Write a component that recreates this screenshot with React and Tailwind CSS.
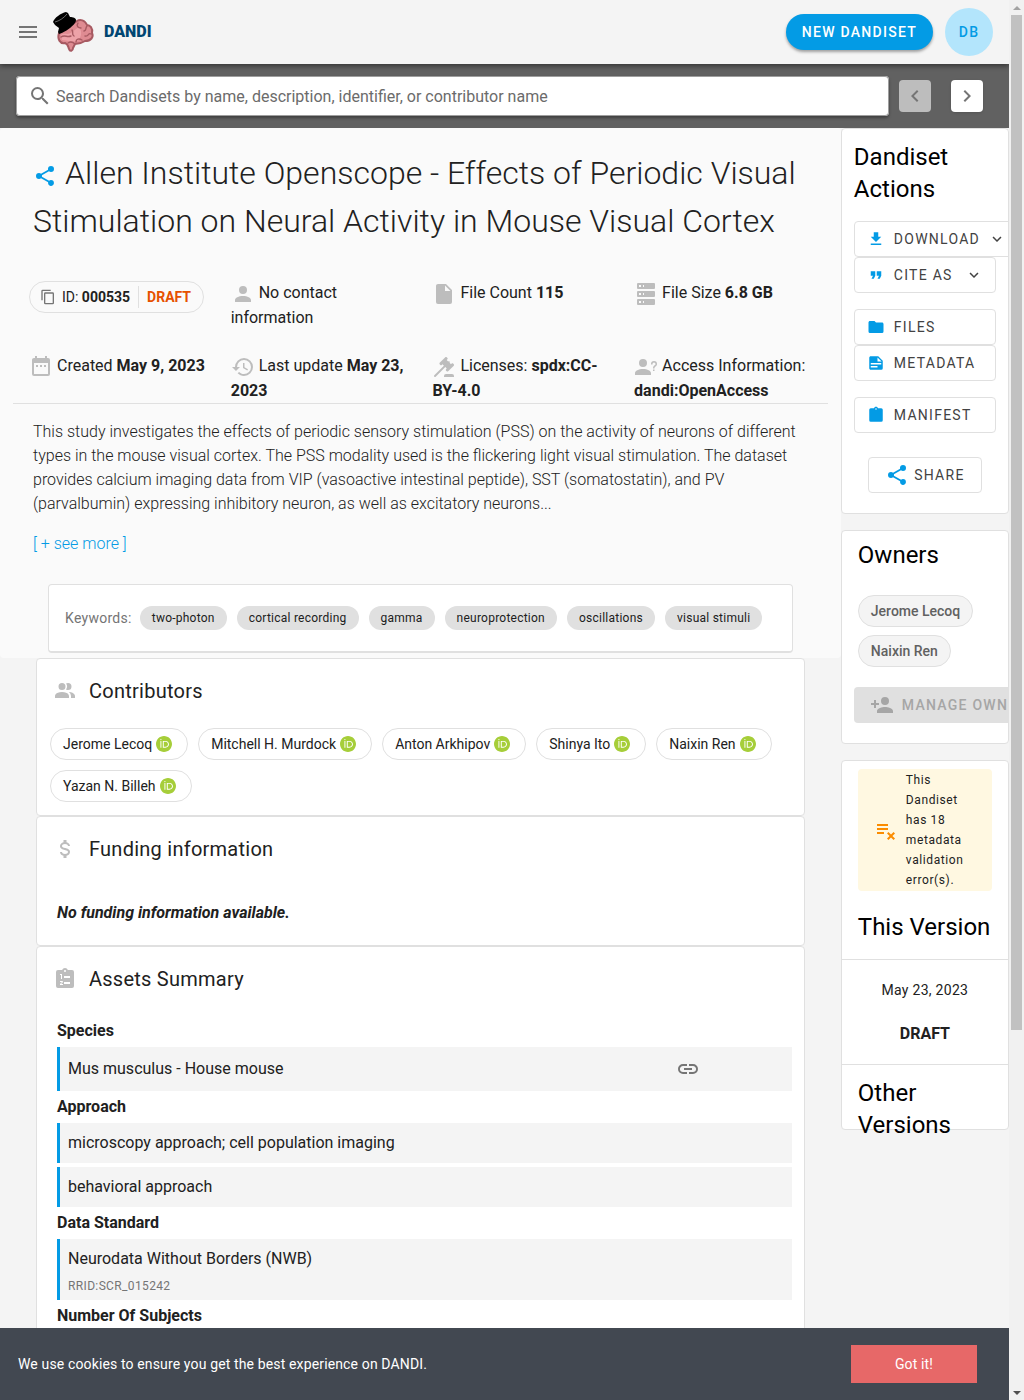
import React from "react";
import { SiOrcid } from "react-icons/si";

const paths = {
  menu: "M3,6H21V8H3V6M3,11H21V13H3V11M3,16H21V18H3V16Z",
  magnify:
    "M9.5,3A6.5,6.5 0 0,1 16,9.5C16,11.11 15.41,12.59 14.44,13.73L14.71,14H15.5L20.5,19L19,20.5L14,15.5V14.71L13.73,14.44C12.59,15.41 11.11,16 9.5,16A6.5,6.5 0 0,1 3,9.5A6.5,6.5 0 0,1 9.5,3M9.5,5C7,5 5,7 5,9.5C5,12 7,14 9.5,14C12,14 14,12 14,9.5C14,7 12,5 9.5,5Z",
  left: "M15.41,16.58L10.83,12L15.41,7.41L14,6L8,12L14,18L15.41,16.58Z",
  right: "M8.59,16.58L13.17,12L8.59,7.41L10,6L16,12L10,18L8.59,16.58Z",
  down: "M7.41,8.58L12,13.17L16.59,8.58L18,10L12,16L6,10L7.41,8.58Z",
  share:
    "M18,16.08C17.24,16.08 16.56,16.38 16.04,16.85L8.91,12.7C8.96,12.47 9,12.24 9,12C9,11.76 8.96,11.53 8.91,11.3L15.96,7.19C16.5,7.69 17.21,8 18,8A3,3 0 0,0 21,5A3,3 0 0,0 18,2A3,3 0 0,0 15,5C15,5.24 15.04,5.47 15.09,5.7L8.04,9.81C7.5,9.31 6.79,9 6,9A3,3 0 0,0 3,12A3,3 0 0,0 6,15C6.79,15 7.5,14.69 8.04,14.19L15.16,18.34C15.11,18.55 15.08,18.77 15.08,19C15.08,20.61 16.39,21.91 18,21.91C19.61,21.91 20.92,20.61 20.92,19A2.92,2.92 0 0,0 18,16.08Z",
  copy: "M19,21H8V7H19M19,5H8A2,2 0 0,0 6,7V21A2,2 0 0,0 8,23H19A2,2 0 0,0 21,21V7A2,2 0 0,0 19,5M16,1H4A2,2 0 0,0 2,3V17H4V3H16V1Z",
  account:
    "M12,4A4,4 0 0,1 16,8A4,4 0 0,1 12,12A4,4 0 0,1 8,8A4,4 0 0,1 12,4M12,14C16.42,14 20,15.79 20,18V20H4V18C4,15.79 7.58,14 12,14Z",
  file: "M13,9V3.5L18.5,9M6,2C4.89,2 4,2.89 4,4V20A2,2 0 0,0 6,22H18A2,2 0 0,0 20,20V8L14,2H6Z",
  server:
    "M4,1H20A1,1 0 0,1 21,2V6A1,1 0 0,1 20,7H4A1,1 0 0,1 3,6V2A1,1 0 0,1 4,1M4,9H20A1,1 0 0,1 21,10V14A1,1 0 0,1 20,15H4A1,1 0 0,1 3,14V10A1,1 0 0,1 4,9M4,17H20A1,1 0 0,1 21,18V22A1,1 0 0,1 20,23H4A1,1 0 0,1 3,22V18A1,1 0 0,1 4,17M9,5H10V3H9V5M9,13H10V11H9V13M9,21H10V19H9V21M5,3V5H7V3H5M5,11V13H7V11H5M5,19V21H7V19H5Z",
  calendar:
    "M9,10H7V12H9V10M13,10H11V12H13V10M17,10H15V12H17V10M19,3H18V1H16V3H8V1H6V3H5C3.89,3 3,3.9 3,5V19A2,2 0 0,0 5,21H19A2,2 0 0,0 21,19V5A2,2 0 0,0 19,3M19,19H5V8H19V19Z",
  history:
    "M13.5,8H12V13L16.28,15.54L17,14.33L13.5,12.25V8M13,3A9,9 0 0,0 4,12H1L4.96,16.03L9,12H6A7,7 0 0,1 13,5A7,7 0 0,1 20,12A7,7 0 0,1 13,19C11.07,19 9.32,18.21 8.06,16.94L6.64,18.36C8.27,20 10.5,21 13,21A9,9 0 0,0 22,12A9,9 0 0,0 13,3",
  gavel:
    "M2.3,20.28L11.9,10.68L10.5,9.26L9.78,9.97C9.39,10.36 8.76,10.36 8.37,9.97L7.66,9.26C7.27,8.87 7.27,8.24 7.66,7.85L13.32,2.19C13.71,1.8 14.34,1.8 14.73,2.19L15.44,2.9C15.83,3.29 15.83,3.92 15.44,4.31L14.73,5L16.15,6.43C16.54,6.04 17.17,6.04 17.56,6.43C17.95,6.82 17.95,7.46 17.56,7.85L18.97,9.26L19.68,8.55C20.07,8.16 20.71,8.16 21.1,8.55L21.8,9.26C22.19,9.65 22.19,10.29 21.8,10.68L16.15,16.33C15.76,16.72 15.12,16.72 14.73,16.33L14.03,15.63C13.63,15.24 13.63,14.6 14.03,14.21L14.73,13.5L13.32,12.09L3.71,21.7C3.32,22.09 2.69,22.09 2.3,21.7C1.91,21.31 1.91,20.67 2.3,20.28M20,19A2,2 0 0,1 22,21V22H12V21A2,2 0 0,1 14,19H20Z",
  accountQuestion:
    "M13,8A4,4 0 0,1 9,12A4,4 0 0,1 5,8A4,4 0 0,1 9,4A4,4 0 0,1 13,8M17,18V20H1V18C1,15.79 4.58,14 9,14C13.42,14 17,15.79 17,18M20.5,14.5V16H19V14.5H20.5M18.5,9.5H17V9A3,3 0 0,1 20,6A3,3 0 0,1 23,9C23,9.97 22.5,10.88 21.71,11.41L21.41,11.6C20.84,12 20.5,12.61 20.5,13.3V13.5H19V13.3C19,12.11 19.6,11 20.59,10.35L20.88,10.16C21.27,9.9 21.5,9.47 21.5,9A1.5,1.5 0 0,0 20,7.5A1.5,1.5 0 0,0 18.5,9V9.5Z",
  people:
    "M16 17V19H2V17S2 13 9 13 16 17 16 17M12.5 7.5A3.5 3.5 0 1 0 9 11A3.5 3.5 0 0 0 12.5 7.5M15.94 13A5.32 5.32 0 0 1 18 17V19H22V17S22 13.37 15.94 13M15 4A3.39 3.39 0 0 0 13.07 4.59A5 5 0 0 1 13.07 10.41A3.39 3.39 0 0 0 15 11A3.5 3.5 0 0 0 15 4Z",
  dollar:
    "M7,15H9C9,16.08 10.37,17 12,17C13.63,17 15,16.08 15,15C15,13.9 13.96,13.5 11.76,12.97C9.64,12.44 7,11.78 7,9C7,7.21 8.47,5.69 10.5,5.18V3H13.5V5.18C15.53,5.69 17,7.21 17,9H15C15,7.92 13.63,7 12,7C10.37,7 9,7.92 9,9C9,10.1 10.04,10.5 12.24,11.03C14.36,11.56 17,12.22 17,15C17,16.79 15.53,18.31 13.5,18.82V21H10.5V18.82C8.47,18.31 7,16.79 7,15Z",
  link: "M3.9,12C3.9,10.29 5.29,8.9 7,8.9H11V7H7A5,5 0 0,0 2,12A5,5 0 0,0 7,17H11V15.1H7C5.29,15.1 3.9,13.71 3.9,12M8,13H16V11H8V13M17,7H13V8.9H17C18.71,8.9 20.1,10.29 20.1,12C20.1,13.71 18.71,15.1 17,15.1H13V17H17A5,5 0 0,0 22,12A5,5 0 0,0 17,7Z",
  download: "M5,20H19V18H5M19,9H15V3H9V9H5L12,16L19,9Z",
  quote: "M14,17H17L19,13V7H13V13H16M6,17H9L11,13V7H5V13H8L6,17Z",
  folder:
    "M10,4H4C2.89,4 2,4.89 2,6V18A2,2 0 0,0 4,20H20A2,2 0 0,0 22,18V8C22,6.89 21.1,6 20,6H12L10,4Z",
  note: "M14,10H19.5L14,4.5V10M5,3H15L21,9V19A2,2 0 0,1 19,21H5C3.89,21 3,20.1 3,19V5C3,3.89 3.89,3 5,3M5,12V14H19V12H5M5,16V18H14V16H5Z",
  clipboard:
    "M19,3H14.82C14.4,1.84 13.3,1 12,1C10.7,1 9.6,1.84 9.18,3H5A2,2 0 0,0 3,5V19A2,2 0 0,0 5,21H19A2,2 0 0,0 21,19V5A2,2 0 0,0 19,3M12,3A1,1 0 0,1 13,4A1,1 0 0,1 12,5A1,1 0 0,1 11,4A1,1 0 0,1 12,3",
  clipboardList:
    "M19,3H14.82C14.4,1.84 13.3,1 12,1C10.7,1 9.6,1.84 9.18,3H5A2,2 0 0,0 3,5V19A2,2 0 0,0 5,21H19A2,2 0 0,0 21,19V5A2,2 0 0,0 19,3M12,3A1,1 0 0,1 13,4A1,1 0 0,1 12,5A1,1 0 0,1 11,4A1,1 0 0,1 12,3M7,7H9V12H8V8H7V7M10,17V18H7V17.08L9,15H7V14H9.25A0.75,0.75 0 0,1 10,14.75C10,14.95 9.92,15.14 9.79,15.27L8.12,17H10M11,9H17V11H11V9M11,15H17V17H11V15Z",
  accountPlus:
    "M15,14C12.33,14 7,15.33 7,18V20H23V18C23,15.33 17.67,14 15,14M6,10V7H4V10H1V12H4V15H6V12H9V10M15,12A4,4 0 0,0 19,8A4,4 0 0,0 15,4A4,4 0 0,0 11,8A4,4 0 0,0 15,12Z",
  listRemove:
    "M14 10H3V12H14V10M14 6H3V8H14V6M3 16H10V14H3V16M14.41 22L17 19.41L19.59 22L21 20.59L18.41 18L21 15.41L19.59 14L17 16.59L14.41 14L13 15.41L15.59 18L13 20.59L14.41 22Z",
};

function Icon({ name, className = "size-6" }) {
  return (
    <svg viewBox="0 0 24 24" fill="currentColor" fillRule="evenodd" aria-hidden="true" className={`shrink-0 ${className}`}>
      <path d={paths[name]} />
    </svg>
  );
}

function Logo() {
  return (
    <svg viewBox="0 0 48 48" aria-hidden="true" className="size-12 shrink-0">
      <path
        d="M9 25 C7 31 10 36 15 35 C18 36 18 38 19 41 C20 44 23 43 23 40 L25 36 C29 36 32 35 35 33 C41 33 44 29 42 25 C43 20 40 17 37 17 C35 12 30 11 27 13 Z"
        fill="#df8b92"
        stroke="#a75a62"
        strokeWidth="2"
        strokeLinejoin="round"
      />
      <path d="M11 27 C14 24 18 28 22 24 L29 19 C32 23 32 28 28 33 C23 34 20 33 12 32 Z" fill="#eda2a8" />
      <path
        d="M11 29 C15 26 17 30 21 28 M22 22 C24 25 21 26 24 28 M28 15 C26 18 28 20 31 20 M37 18 C35 20 37 22 34 23 M41 26 C38 24 39 29 35 28 M26 34 C26 31 29 30 32 32 M18 35 C21 33 24 35 25 36"
        fill="none"
        stroke="#a75a62"
        strokeWidth="1.4"
        strokeLinecap="round"
      />
      <path d="M3 14 C4 10 11 5 16 4 L18 5 L20 9 C23 9 26 10 26 12 C26 17 14 25 9 26 L8 24 L9 20 L5 17 Z" fill="#000" />
      <path d="M5 14 C9 13 14 10 17 6" fill="none" stroke="#b0b0b0" strokeWidth="0.6" />
    </svg>
  );
}

const keywords = ["two-photon", "cortical recording", "gamma", "neuroprotection", "oscillations", "visual stimuli"];
const contributors = ["Jerome Lecoq", "Mitchell H. Murdock", "Anton Arkhipov", "Shinya Ito", "Naixin Ren", "Yazan N. Billeh"];

function Fact({ icon, children }) {
  return (
    <div className="pr-6">
      <Icon name={icon} className="-my-px mr-1 inline-block size-6 align-middle text-[#bdbdbd]" />
      {children}
    </div>
  );
}

function Section({ icon, title, children }) {
  return (
    <section className="rounded border border-[#e0e0e0] bg-white">
      <h2 className="flex h-16 items-center gap-3 px-4 text-xl tracking-[0.0125em]">
        <Icon name={icon} className="size-6 text-[#bdbdbd]" />
        {title}
      </h2>
      {children}
    </section>
  );
}

function AssetGroup({ label, children }) {
  return (
    <div>
      <h3 className="h-8 font-bold leading-8">{label}</h3>
      <div className="flex flex-col gap-1">{children}</div>
    </div>
  );
}

function AssetRow({ children }) {
  return <div className="border-l-[3px] border-[#039be5] bg-[#f4f4f4] px-2 py-2">{children}</div>;
}

function ActionButton({ icon, children, menu, wide }) {
  return (
    <button
      type="button"
      className={`flex h-9 items-center whitespace-nowrap rounded border border-[#e0e0e0] bg-white px-3 text-sm tracking-[0.09em] text-[#424242] ${wide ? "w-40" : "w-full"}`}
    >
      <Icon name={icon} className="mr-[9px] size-[18px] text-[#039be5]" />
      <span>{children}</span>
      {menu && <Icon name="down" className={`size-[18px] ${wide ? "ml-2" : "ml-3"}`} />}
    </button>
  );
}

function SideCard({ className = "", children }) {
  return <section className={`rounded border border-[#e0e0e0] bg-white ${className}`}>{children}</section>;
}

export default function App() {
  return (
    <div className="flex h-screen overflow-hidden bg-[#f4f4f4] font-[Roboto,sans-serif] text-base text-[#212121]">
      <div className="flex min-w-0 flex-1 flex-col overflow-hidden">
        <header className="z-10 flex h-16 shrink-0 items-center bg-[#f4f4f4] px-4 shadow-[0_2px_5px_rgba(0,0,0,0.45)]">
          <button type="button" aria-label="Menu" className="text-[#757575]">
            <Icon name="menu" />
          </button>
          <a href="#home" className="ml-[10px] flex items-center gap-[6px] font-black text-[#004672]">
            <Logo />
            DANDI
          </a>
          <button
            type="button"
            className="ml-auto mr-3 h-9 rounded-full bg-[#039be5] px-4 text-sm font-medium tracking-[0.09em] text-white shadow-[0_2px_3px_rgba(0,0,0,0.35)]"
          >
            NEW DANDISET
          </button>
          <button type="button" className="size-12 rounded-full bg-[#b3e5fc] text-sm font-medium tracking-[0.09em] text-[#039be5]">
            DB
          </button>
        </header>

        <div className="flex h-16 shrink-0 items-center bg-[#616161] pl-4 pr-[26px]">
          <label className="mr-[10px] flex h-10 flex-1 items-center rounded bg-white px-3 text-[#757575] shadow-[0_2px_3px_rgba(0,0,0,0.35)] ring-1 ring-inset ring-[#9e9e9e]">
            <Icon name="magnify" />
            <input
              aria-label="Search Dandisets"
              placeholder="Search Dandisets by name, description, identifier, or contributor name"
              className="ml-1 w-full bg-transparent pt-px outline-none placeholder:text-[#6b6b6b]"
            />
          </label>
          <button type="button" disabled aria-label="Previous" className="mr-5 flex size-8 items-center justify-center rounded bg-[#bdbdbd] text-[#757575]">
            <Icon name="left" />
          </button>
          <button type="button" aria-label="Next" className="flex size-8 items-center justify-center rounded bg-white text-[#757575] shadow">
            <Icon name="right" />
          </button>
        </div>

        <div className="flex min-h-0 flex-1 items-start overflow-hidden">
          <main className="w-5/6">
            <div className="rounded bg-[#fafafa] pb-[5px] pt-[21px]">
              <h1 className="px-[33px] text-[32px] font-light leading-[48px]">
                <button type="button" aria-label="Share" className="mr-2 inline-block align-middle text-[#039be5]">
                  <Icon name="share" />
                </button>
                Allen Institute Openscope - Effects of Periodic Visual Stimulation on Neural Activity in Mouse Visual Cortex
              </h1>

              <div className="ml-[13px] mr-[13px] mt-[35px] border-b border-[#e0e0e0] pl-4">
                <div className="-mr-2 grid grid-cols-4 gap-y-[23px] leading-[25px]">
                  <div className="pt-px">
                    <div className="inline-flex h-8 items-center rounded-full border border-[#e0e0e0] px-3 align-top text-sm">
                      <Icon name="copy" className="-ml-[2px] mr-[6px] size-4 text-[#757575]" />
                      <span>
                        ID: <b>000535</b>
                      </span>
                      <span className="mx-2 h-[22px] w-px bg-[#e0e0e0]" />
                      <b className="text-[#e65100]">DRAFT</b>
                    </div>
                  </div>
                  <Fact icon="account">No contact information</Fact>
                  <Fact icon="file">
                    File Count <b>115</b>
                  </Fact>
                  <Fact icon="server">
                    File Size <b>6.8 GB</b>
                  </Fact>
                  <Fact icon="calendar">
                    Created <b>May 9, 2023</b>
                  </Fact>
                  <Fact icon="history">
                    Last update <b>May 23, 2023</b>
                  </Fact>
                  <Fact icon="gavel">
                    Licenses: <b>spdx:CC-BY-4.0</b>
                  </Fact>
                  <Fact icon="accountQuestion">
                    Access Information: <b>dandi:OpenAccess</b>
                  </Fact>
                </div>
              </div>

              <div className="px-[33px] pt-4 font-light leading-6">
                <p>
                  This study investigates the effects of periodic sensory stimulation (PSS) on the activity of neurons of different types in the
                  mouse visual cortex. The PSS modality used is the flickering light visual stimulation. The dataset provides calcium imaging
                  data from VIP (vasoactive intestinal peptide), SST (somatostatin), and PV (parvalbumin) expressing inhibitory neuron, as well
                  as excitatory neurons...
                </p>
                <a href="#more" className="mt-4 inline-block text-[#039be5]">
                  [ + see more ]
                </a>
              </div>

              <div className="mx-12 mt-7 flex flex-wrap items-center gap-[10px] rounded border border-b-2 border-[#e0e0e0] bg-white px-4 py-[21px]">
                <span className="-mr-[2px] text-sm tracking-[0.02em] text-[#757575]">Keywords:</span>
                {keywords.map((k) => (
                  <span key={k} className="h-6 rounded-full bg-[#e0e0e0] px-3 text-xs leading-6 tracking-[0.02em]">
                    {k}
                  </span>
                ))}
              </div>
            </div>

            <div className="mx-9">
              <Section icon="people" title="Contributors">
                <ul className="flex flex-wrap gap-[10px] px-[13px] pb-[13px] pt-[5px]">
                  {contributors.map((name) => (
                    <li key={name} className="flex h-8 items-center gap-1 rounded-full border border-[#e0e0e0] pl-3 pr-[15px] text-sm">
                      {name}
                      <SiOrcid className="size-4 text-[#a6ce39]" aria-hidden="true" />
                    </li>
                  ))}
                </ul>
              </Section>
              <Section icon="dollar" title="Funding information">
                <p className="px-5 pb-5 pt-5 font-bold italic leading-6">No funding information available.</p>
              </Section>
              <Section icon="clipboardList" title="Assets Summary">
                <div className="pb-5 pl-5 pr-3 pt-1">
                  <AssetGroup label="Species">
                    <AssetRow>
                      <div className="flex h-7 items-center">
                        <span className="w-[85%]">Mus musculus - House mouse</span>
                        <a href="#species" aria-label="Species link" className="text-[#757575]">
                          <Icon name="link" />
                        </a>
                      </div>
                    </AssetRow>
                  </AssetGroup>
                  <AssetGroup label="Approach">
                    <AssetRow>microscopy approach; cell population imaging</AssetRow>
                    <AssetRow>behavioral approach</AssetRow>
                  </AssetGroup>
                  <AssetGroup label="Data Standard">
                    <AssetRow>
                      Neurodata Without Borders (NWB)
                      <div className="-mb-[2px] mt-[7px] text-xs leading-4 tracking-[0.03em] text-[#757575]">RRID:SCR_015242</div>
                    </AssetRow>
                  </AssetGroup>
                  <AssetGroup label="Number Of Subjects" />
                </div>
              </Section>
            </div>
          </main>

          <aside className="flex w-1/6 flex-col gap-4">
            <SideCard className="overflow-hidden px-3 pb-5 pt-3">
              <h2 className="mb-4 text-2xl leading-8 text-black">Dandiset Actions</h2>
              <ActionButton icon="download" menu wide>
                DOWNLOAD
              </ActionButton>
              <ActionButton icon="quote" menu>
                CITE AS
              </ActionButton>
              <div className="h-4" />
              <ActionButton icon="folder">FILES</ActionButton>
              <ActionButton icon="note">METADATA</ActionButton>
              <div className="h-4" />
              <ActionButton icon="clipboard">MANIFEST</ActionButton>
              <button
                type="button"
                className="mx-auto mt-6 flex h-9 items-center gap-[5px] rounded border border-[#e0e0e0] px-4 text-sm tracking-[0.09em] text-[#424242]"
              >
                <Icon name="share" className="size-6 text-[#039be5]" />
                SHARE
              </button>
            </SideCard>

            <SideCard className="overflow-hidden px-4 pb-5 pt-2">
              <h2 className="text-2xl leading-8 text-black">Owners</h2>
              <ul className="mb-5 mt-6 flex flex-col items-start gap-2">
                {["Jerome Lecoq", "Naixin Ren"].map((o) => (
                  <li key={o} className="flex h-8 items-center rounded-full border border-[#e0e0e0] bg-[#f4f4f4] px-3 text-sm font-medium text-[#616161]">
                    {o}
                  </li>
                ))}
              </ul>
              <button
                type="button"
                disabled
                className="-ml-1 flex h-9 w-52 items-center gap-2 whitespace-nowrap rounded bg-[#e0e0e0] px-4 text-sm font-medium tracking-[0.09em] text-[#a6a6a6]"
              >
                <Icon name="accountPlus" />
                MANAGE OWNERS
              </button>
            </SideCard>

            <SideCard className="h-[370px] pt-2">
              <div role="alert" className="mx-4 flex items-center rounded bg-[#fff8e1] px-4 py-px text-xs leading-5 tracking-wider">
                <Icon name="listRemove" className="mr-2 size-6 text-[#fb8c00]" />
                <p>This Dandiset has 18 metadata validation error(s).</p>
              </div>
              <h2 className="mt-5 border-b border-[#e0e0e0] px-4 pb-4 text-2xl leading-8 text-black">This Version</h2>
              <div className="flex flex-col items-center border-b border-[#e0e0e0] pb-[18px] pt-5">
                <span className="text-sm tracking-[0.02em]">May 23, 2023</span>
                <b className="mt-[22px]">DRAFT</b>
              </div>
              <h2 className="mt-3 px-4 text-2xl leading-8 text-black">Other Versions</h2>
            </SideCard>
          </aside>
        </div>

        <footer className="flex h-18 shrink-0 items-center justify-between bg-[#424851] pl-[18px] pr-8 text-sm tracking-[0.01em] text-white">
          <p>We use cookies to ensure you get the best experience on DANDI.</p>
          <button type="button" className="h-[38px] w-[126px] bg-[#e76868]">
            Got it!
          </button>
        </footer>
      </div>

      <div aria-hidden="true" className="flex w-[15px] shrink-0 flex-col items-center bg-[#f1f1f1]">
        <div className="flex h-[15px] items-center">
          <div className="border-x-4 border-b-4 border-x-transparent border-b-[#a3a3a3]" />
        </div>
        <div className="h-[1015px] w-[11px] bg-[#c1c1c1]" />
        <div className="mt-auto flex h-[15px] items-center">
          <div className="border-x-4 border-t-4 border-x-transparent border-t-[#505050]" />
        </div>
      </div>
    </div>
  );
}
